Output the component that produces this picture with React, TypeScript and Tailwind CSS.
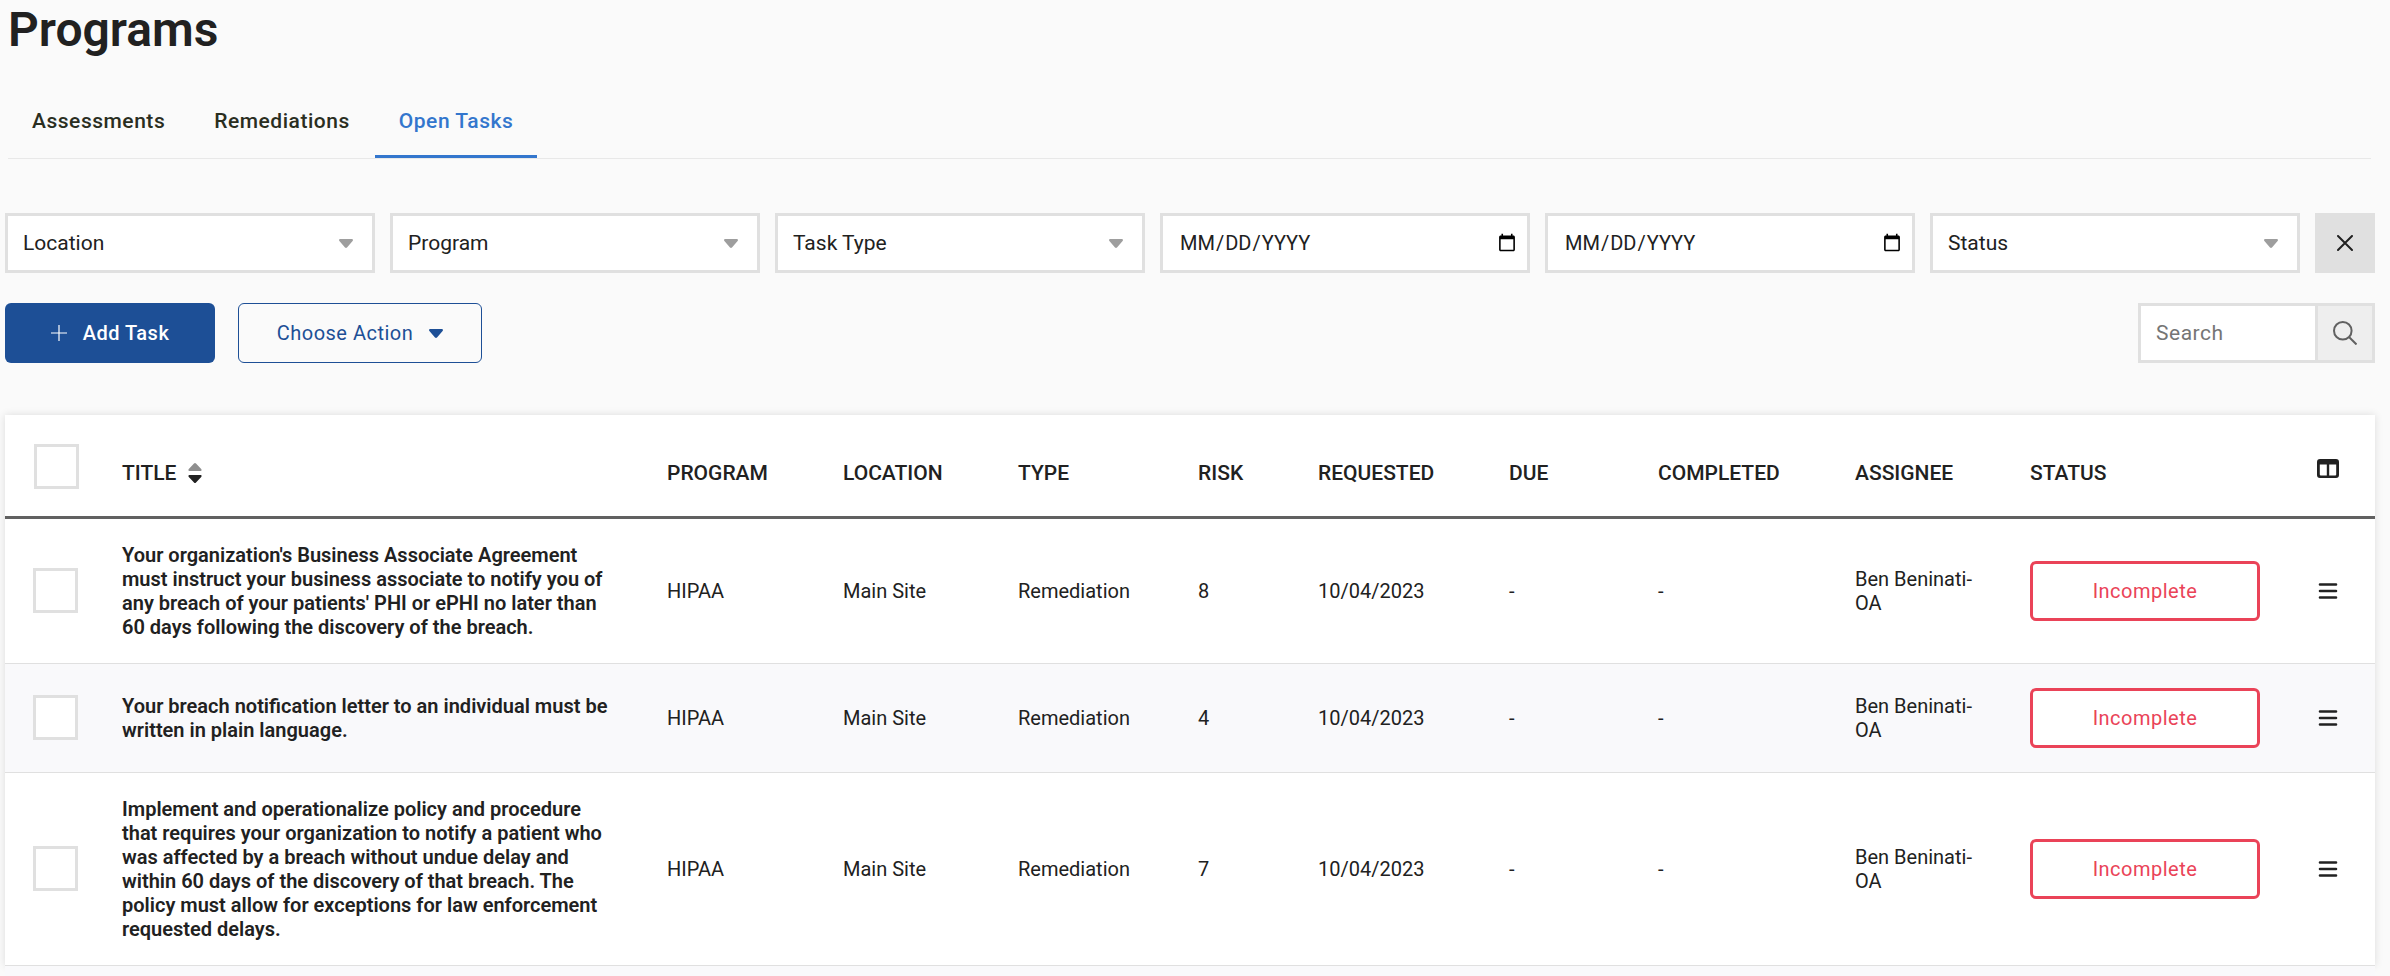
import { useState } from 'react';
import clsx from 'clsx';

const tabs = ['Assessments', 'Remediations', 'Open Tasks'];

const columns = [
  { label: 'Title', width: '' },
  { label: 'Program', width: 'w-[176px]' },
  { label: 'Location', width: 'w-[175px]' },
  { label: 'Type', width: 'w-[180px]' },
  { label: 'Risk', width: 'w-[120px]' },
  { label: 'Requested', width: 'w-[191px]' },
  { label: 'Due', width: 'w-[149px]' },
  { label: 'Completed', width: 'w-[197px]' },
  { label: 'Assignee', width: 'w-[175px]' },
  { label: 'Status', width: 'w-[278px]' },
];

const tasks = [
  {
    title:
      "Your organization's Business Associate Agreement must instruct your business associate to notify you of any breach of your patients' PHI or ePHI no later than 60 days following the discovery of the breach.",
    risk: 8,
  },
  {
    title: 'Your breach notification letter to an individual must be written in plain language.',
    risk: 4,
  },
  {
    title:
      'Implement and operationalize policy and procedure that requires your organization to notify a patient who was affected by a breach without undue delay and within 60 days of the discovery of that breach. The policy must allow for exceptions for law enforcement requested delays.',
    risk: 7,
  },
];

const Caret = ({ className }: { className?: string }) => (
  <svg viewBox="0 0 14 9" className={clsx('h-[9px] w-3.5', className)} fill="currentColor" aria-hidden="true">
    <path d="M1.2 0h11.6c1 0 1.5 1.2.8 1.9L8 8.5c-.6.6-1.4.6-2 0L.4 1.9C-.3 1.2.2 0 1.2 0z" />
  </svg>
);

const FilterSelect = ({ label }: { label: string }) => (
  <div className="relative min-w-0 flex-1">
    <select
      aria-label={label}
      className="h-[60px] w-full appearance-none border-3 border-[#e0e0e0] bg-white px-[15px] text-[21px]"
    >
      <option>{label}</option>
    </select>
    <Caret className="pointer-events-none absolute top-[26px] right-[22px] text-[#9e9e9e]" />
  </div>
);

const FilterDate = ({ label }: { label: string }) => (
  <div className="min-w-0 flex-1">
    <input
      type="date"
      aria-label={label}
      className="h-[60px] w-full border-3 border-[#e0e0e0] bg-white pr-2 pl-4 text-[20px] uppercase"
    />
  </div>
);

const Checkbox = ({ label }: { label: string }) => (
  <input
    type="checkbox"
    aria-label={label}
    className="block size-[45px] appearance-none border-3 border-[#e0e0e0] bg-white checked:bg-[#1d4f96]"
  />
);

const SortIcon = () => (
  <svg viewBox="0 0 14 20" className="h-5 w-3.5" aria-hidden="true">
    <path d="M6 .6c.6-.7 1.4-.7 2 0l5.2 5.5c.7.8.4 1.9-.6 1.9H1.4C.4 8 .1 6.9.8 6.1z" fill="#8f8f8f" />
    <path d="M6 19.4c.6.7 1.4.7 2 0l5.2-5.500c.7-.8.4-1.900-.6-1.900H1.400c-1 0-1.300 1.100-.6 1.900z" fill="#212121" />
  </svg>
);

export default function App() {
  const [activeTab, setActiveTab] = useState('Open Tasks');

  return (
    <div className="min-h-screen bg-[#fafafa] pr-[15px] pl-[5px] font-[Roboto,sans-serif] text-[20px] leading-6 text-[#212121]">
      <h1 className="pl-[3px] text-[48px] leading-[60px] font-semibold">Programs</h1>

      <nav className="mr-1 ml-[3px] flex h-[99px] items-end gap-px border-b border-[#e8e8e8]">
        {tabs.map((tab) => (
          <button
            key={tab}
            type="button"
            onClick={() => setActiveTab(tab)}
            className={clsx(
              'h-[72px] border-b-3 px-6 text-[21px] font-medium tracking-wide',
              tab === activeTab ? 'border-[#3376cd] text-[#3376cd]' : 'border-transparent text-[#2a2e1f]'
            )}
          >
            {tab}
          </button>
        ))}
      </nav>

      <div className="mt-[54px] flex gap-[15px]">
        <FilterSelect label="Location" />
        <FilterSelect label="Program" />
        <FilterSelect label="Task Type" />
        <FilterDate label="Start date" />
        <FilterDate label="End date" />
        <FilterSelect label="Status" />
        <button type="button" aria-label="Clear filters" className="flex size-[60px] items-center justify-center bg-[#e0e0e0]">
          <svg viewBox="0 0 16 16" className="size-4" fill="none" stroke="currentColor" strokeWidth="2" strokeLinecap="round">
            <path d="M1 1l14 14M15 1L1 15" />
          </svg>
        </button>
      </div>

      <div className="mt-[30px] flex items-center">
        <button
          type="button"
          className="flex h-[60px] w-[210px] items-center justify-center gap-4 rounded-md bg-[#1d4f96] font-medium tracking-wide text-white"
        >
          <svg viewBox="0 0 16 16" className="size-4" fill="none" stroke="currentColor" strokeWidth="1.2">
            <path d="M8 0v16M0 8h16" />
          </svg>
          Add Task
        </button>
        <button
          type="button"
          className="ml-[23px] flex h-[60px] w-[244px] items-center justify-center gap-4 rounded-md border border-[#1d4f96] tracking-wide text-[#1d4f96]"
        >
          Choose Action
          <Caret />
        </button>
        <form className="ml-auto flex" onSubmit={(e) => e.preventDefault()}>
          <input
            type="search"
            aria-label="Search"
            placeholder="Search"
            className="h-[60px] w-[177px] border-3 border-r-0 border-[#e0e0e0] bg-white px-[15px] text-[21px] tracking-wide placeholder:text-[#757575]"
          />
          <button
            type="submit"
            aria-label="Submit search"
            className="flex size-[60px] items-center justify-center border-3 border-[#e0e0e0] bg-[#eeeeee] text-[#616161]"
          >
            <svg viewBox="0 0 24 24" className="size-6" fill="none" stroke="currentColor" strokeWidth="2">
              <circle cx="9.8" cy="9.8" r="8.8" />
              <path d="M16 16l7.5 7.5" />
            </svg>
          </button>
        </form>
      </div>

      <table className="mt-[52px] w-full table-fixed bg-white text-left shadow-[0_0_8px_rgba(0,0,0,0.12)]">
        <thead>
          <tr className="border-b-3 border-[#616161] align-bottom">
            <th className="h-[102px] w-[93px] pb-[27px] pl-[29px]">
              <Checkbox label="Select all tasks" />
            </th>
            {columns.map(({ label, width }) => (
              <th key={label} className={clsx('px-6 pb-[31px] text-[21px] font-medium uppercase', width)}>
                {label === 'Title' ? (
                  <button type="button" className="flex items-center gap-3 uppercase">
                    {label}
                    <SortIcon />
                  </button>
                ) : (
                  label
                )}
              </th>
            ))}
            <th className="w-[91px] pb-[38px] pl-[33px]">
              <button type="button" aria-label="Choose columns" className="block">
                <svg viewBox="0 0 22 19" className="h-[19px] w-[22px]">
                  <path
                    fill="currentColor"
                    fillRule="evenodd"
                    d="M3 0h16a3 3 0 0 1 3 3v13a3 3 0 0 1-3 3H3a3 3 0 0 1-3-3V3a3 3 0 0 1 3-3zM2.8 5.5V15.5a1 1 0 0 0 1 1h6V5.5zM12.2 5.5V16.5H18.2a1 1 0 0 0 1-1V5.5z"
                  />
                </svg>
              </button>
            </th>
          </tr>
        </thead>
        <tbody>
          {tasks.map((task) => (
            <tr key={task.title} className="border-b border-[#e0e0e0] even:bg-[#f9f9fb]">
              <td className="pl-7">
                <Checkbox label={task.title} />
              </td>
              <td className="px-6 py-6 font-semibold">{task.title}</td>
              <td className="px-6">HIPAA</td>
              <td className="px-6">Main Site</td>
              <td className="px-6">Remediation</td>
              <td className="px-6">{task.risk}</td>
              <td className="px-6">10/04/2023</td>
              <td className="px-6">-</td>
              <td className="px-6">-</td>
              <td className="px-6">Ben Beninati-OA</td>
              <td className="px-6 py-6">
                <button
                  type="button"
                  className="block h-[60px] w-full rounded-md border-3 border-[#ea4358] bg-white tracking-wide text-[#ea4358]"
                >
                  Incomplete
                </button>
              </td>
              <td className="pl-[34px]">
                <button type="button" aria-label="Task menu" className="block">
                  <svg viewBox="0 0 20 16" className="h-4 w-5" stroke="currentColor" strokeWidth="2.6" strokeLinecap="round">
                    <path d="M2 1.5h16M2 8h16M2 14.5h16" />
                  </svg>
                </button>
              </td>
            </tr>
          ))}
        </tbody>
      </table>
      <div className="h-2.5 bg-[#f9f9fb]" />
    </div>
  );
}
